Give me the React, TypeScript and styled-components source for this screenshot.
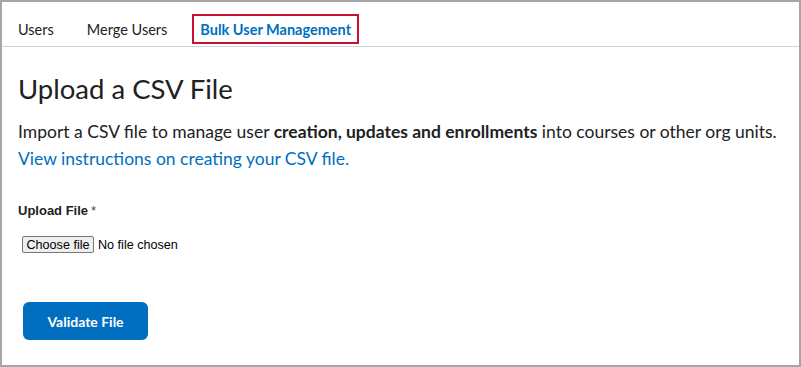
import styled, { createGlobalStyle } from "styled-components";

const GlobalStyle = createGlobalStyle`
  html, body {
    margin: 0;
    padding: 0;
    background: #ffffff;
  }
  * {
    box-sizing: border-box;
  }
`;

const Frame = styled.div`
  width: 801px;
  height: 367px;
  border: 2px solid #a6a6a6;
  background: #ffffff;
  font-family: Lato, "Noto Sans", sans-serif;
  color: #202122;
  overflow: hidden;
`;

const TabBar = styled.nav`
  display: flex;
  align-items: center;
  height: 45px;
  padding: 10px 0 0 14px;
  border-bottom: 1px solid #cdd5dc;
`;

const Tab = styled.a<{ $active?: boolean }>`
  display: flex;
  align-items: center;
  height: 30px;
  padding: 0 6px;
  margin-right: ${(p) => (p.$active ? "0" : "17px")};
  font-size: 14.5px;
  font-weight: ${(p) => (p.$active ? 700 : 400)};
  color: ${(p) => (p.$active ? "#006fbf" : "#202122")};
  border: 2px solid ${(p) => (p.$active ? "#c8102e" : "transparent")};
  text-decoration: none;
  cursor: pointer;
  &:first-child {
    padding-left: 0;
  }
`;

const Content = styled.main`
  padding: 0 0 0 16px;
`;

const Title = styled.h1`
  margin: 25px 0 0;
  font-size: 27.5px;
  font-weight: 400;
  line-height: 34px;
  color: #202122;
`;

const Lead = styled.p`
  margin: 12px 0 0;
  font-size: 17.5px;
  line-height: 27px;
  color: #202122;
  strong {
    font-weight: 700;
  }
`;

const Link = styled.a`
  color: #006fbf;
  text-decoration: none;
  cursor: pointer;
`;

const Field = styled.div`
  display: flex;
  flex-direction: column;
  margin-top: 31px;
`;

const Label = styled.span`
  font-family: "Liberation Sans", Arial, sans-serif;
  font-size: 13px;
  font-weight: 700;
  color: #202122;
  line-height: 16px;
`;

const Required = styled.span`
  font-weight: 400;
  color: #494c4e;
  margin-left: 3px;
`;

const FilePicker = styled.label`
  display: flex;
  align-items: center;
  gap: 4px;
  margin: 17px 0 0 4px;
  font-family: "Liberation Sans", Arial, sans-serif;
  font-size: 12.6px;
  color: #000;
  cursor: pointer;
  input {
    display: none;
  }
`;

const ChooseButton = styled.span`
  display: flex;
  align-items: center;
  justify-content: center;
  width: 72px;
  height: 17px;
  border: 1px solid #767676;
  border-radius: 2px;
  background: #efefef;
  color: #000;
`;

const PrimaryButton = styled.button`
  margin: 49px 0 0 5px;
  width: 125px;
  height: 38px;
  border: none;
  border-radius: 6px;
  background: #006fbf;
  color: #ffffff;
  font-family: Lato, "Noto Sans", sans-serif;
  font-size: 14px;
  font-weight: 700;
  cursor: pointer;
`;

export default function App() {
  return (
    <>
      <GlobalStyle />
      <Frame>
        <TabBar>
          <Tab>Users</Tab>
          <Tab>Merge Users</Tab>
          <Tab $active>Bulk User Management</Tab>
        </TabBar>
        <Content>
          <Title>Upload a CSV File</Title>
          <Lead>
            Import a CSV file to manage user{" "}
            <strong>creation, updates and enrollments</strong> into courses or
            other org units.
            <br />
            <Link>View instructions on creating your CSV file.</Link>
          </Lead>
          <Field>
            <Label>
              Upload File<Required>*</Required>
            </Label>
            <FilePicker>
              <input type="file" />
              <ChooseButton>Choose file</ChooseButton>
              <span>No file chosen</span>
            </FilePicker>
          </Field>
          <PrimaryButton>Validate File</PrimaryButton>
        </Content>
      </Frame>
    </>
  );
}
